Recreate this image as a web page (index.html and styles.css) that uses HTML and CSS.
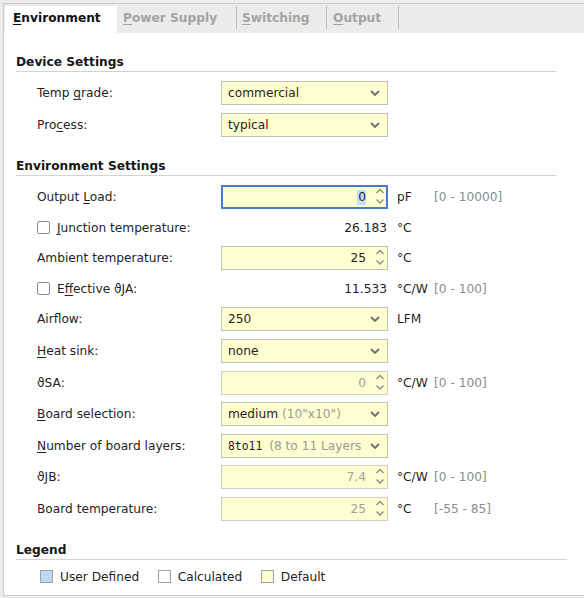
FILE: index.html
```html
<!DOCTYPE html>
<html>
<head>
<meta charset="utf-8">
<title>Environment</title>
<link rel="stylesheet" href="styles.css">
</head>
<body>
<div class="window">
  <div class="tabbar">
    <div class="tab tab-env"><span><u>E</u>nvironment</span></div>
    <div class="tab tab-power"><span><u>P</u>ower Supply</span></div>
    <span class="tab-sep"></span>
    <div class="tab tab-switch"><span><u>S</u>witching</span></div>
    <span class="tab-sep"></span>
    <div class="tab tab-output"><span><u>O</u>utput</span></div>
    <span class="tab-sep"></span>
  </div>

  <div class="content">
    <section class="section">
      <h2 class="section-title">Device Settings</h2>
      <div class="rows rows-device">
        <div class="row">
          <span class="label">Temp <u>g</u>rade:</span>
          <div class="combo"><span class="combo-text">commercial</span><svg class="chev" width="10" height="6" viewBox="0 0 10 6"><path d="M1 1 L5 5 L9 1" /></svg></div>
        </div>
        <div class="row">
          <span class="label">Pro<u>c</u>ess:</span>
          <div class="combo"><span class="combo-text">typical</span><svg class="chev" width="10" height="6" viewBox="0 0 10 6"><path d="M1 1 L5 5 L9 1" /></svg></div>
        </div>
      </div>
    </section>

    <section class="section">
      <h2 class="section-title">Environment Settings</h2>
      <div class="rows rows-env">
        <div class="row">
          <span class="label">Output <u>L</u>oad:</span>
          <div class="spinner focused"><span class="spin-value"><span class="selected-text">0</span></span><svg class="spin-arrows" width="10" height="22" viewBox="0 0 10 22"><path d="M1.5 7 L5 3.5 L8.5 7" /><path d="M1.5 13.5 L5 17 L8.5 13.5" /></svg></div>
          <span class="unit">pF</span>
          <span class="range">[0 - 10000]</span>
        </div>
        <div class="row row-check">
          <span class="label check-label"><span class="checkbox"></span><span><u>J</u>unction temperature:</span></span>
          <span class="calc-value">26.183</span>
          <span class="unit">°C</span>
        </div>
        <div class="row">
          <span class="label">Ambient temperature:</span>
          <div class="spinner"><span class="spin-value">25</span><svg class="spin-arrows" width="10" height="22" viewBox="0 0 10 22"><path d="M1.5 7 L5 3.5 L8.5 7" /><path d="M1.5 13.5 L5 17 L8.5 13.5" /></svg></div>
          <span class="unit">°C</span>
        </div>
        <div class="row row-check">
          <span class="label check-label"><span class="checkbox"></span><span>E<u>f</u>fective ϑJA:</span></span>
          <span class="calc-value">11.533</span>
          <span class="unit">°C/W</span>
          <span class="range">[0 - 100]</span>
        </div>
        <div class="row">
          <span class="label">Airflow:</span>
          <div class="combo"><span class="combo-text">250</span><svg class="chev" width="10" height="6" viewBox="0 0 10 6"><path d="M1 1 L5 5 L9 1" /></svg></div>
          <span class="unit">LFM</span>
        </div>
        <div class="row">
          <span class="label"><u>H</u>eat sink:</span>
          <div class="combo"><span class="combo-text">none</span><svg class="chev" width="10" height="6" viewBox="0 0 10 6"><path d="M1 1 L5 5 L9 1" /></svg></div>
        </div>
        <div class="row">
          <span class="label">ϑSA:</span>
          <div class="spinner disabled"><span class="spin-value">0</span><svg class="spin-arrows" width="10" height="22" viewBox="0 0 10 22"><path d="M1.5 7 L5 3.5 L8.5 7" /><path d="M1.5 13.5 L5 17 L8.5 13.5" /></svg></div>
          <span class="unit">°C/W</span>
          <span class="range">[0 - 100]</span>
        </div>
        <div class="row">
          <span class="label"><u>B</u>oard selection:</span>
          <div class="combo"><span class="combo-text">medium <span class="hint">(10"x10")</span></span><svg class="chev" width="10" height="6" viewBox="0 0 10 6"><path d="M1 1 L5 5 L9 1" /></svg></div>
        </div>
        <div class="row">
          <span class="label"><u>N</u>umber of board layers:</span>
          <div class="combo"><span class="combo-text"><span class="mono">8to11 </span><span class="hint">(8 to 11 Layers)</span></span><svg class="chev" width="10" height="6" viewBox="0 0 10 6"><path d="M1 1 L5 5 L9 1" /></svg></div>
        </div>
        <div class="row">
          <span class="label">ϑJB:</span>
          <div class="spinner disabled"><span class="spin-value">7.4</span><svg class="spin-arrows" width="10" height="22" viewBox="0 0 10 22"><path d="M1.5 7 L5 3.5 L8.5 7" /><path d="M1.5 13.5 L5 17 L8.5 13.5" /></svg></div>
          <span class="unit">°C/W</span>
          <span class="range">[0 - 100]</span>
        </div>
        <div class="row">
          <span class="label">Board temperature:</span>
          <div class="spinner disabled"><span class="spin-value">25</span><svg class="spin-arrows" width="10" height="22" viewBox="0 0 10 22"><path d="M1.5 7 L5 3.5 L8.5 7" /><path d="M1.5 13.5 L5 17 L8.5 13.5" /></svg></div>
          <span class="unit">°C</span>
          <span class="range">[-55 - 85]</span>
        </div>
      </div>
    </section>

    <section class="section">
      <h2 class="section-title legend-title">Legend</h2>
      <div class="legend">
        <span class="legend-item"><span class="swatch swatch-user"></span>User Defined</span>
        <span class="legend-item"><span class="swatch swatch-calc"></span>Calculated</span>
        <span class="legend-item"><span class="swatch swatch-default"></span>Default</span>
      </div>
    </section>
  </div>
</div>
</body>
</html>
```

FILE: styles.css
```css
* {
  box-sizing: border-box;
}

html,
body {
  margin: 0;
  padding: 0;
}

body {
  width: 584px;
  height: 598px;
  overflow: hidden;
  background: #ececec;
  font-family: "DejaVu Sans", "Noto Sans", sans-serif;
  font-size: 12.2px;
  line-height: 16px;
  color: #222222;
}

u {
  text-decoration-thickness: 1px;
  text-underline-offset: 2px;
}

.window {
  margin: 3px 0 0 3px;
  height: 593px;
  background: #ffffff;
  border: 1px solid #cbcbcb;
  border-right: 0;
}

/* Tabs */
.tabbar {
  display: flex;
  height: 29px;
  background: #ebebeb;
}

.tab {
  height: 29px;
  padding-top: 6px;
  font-weight: bold;
  color: #a3a3a3;
  white-space: nowrap;
}

.tab-env {
  width: 112px;
  height: 27px;
  margin: 2px 0 0 1px;
  padding: 4px 0 0 8px;
  background: #ffffff;
  color: #111111;
}

.tab-power {
  width: 119px;
  padding-left: 6px;
}

.tab-switch {
  width: 89px;
  padding-left: 5px;
}

.tab-output {
  width: 71px;
  padding-left: 6px;
}

.tab-sep {
  width: 1px;
  height: 23px;
  margin-top: 2px;
  background: #bcbcbc;
}

/* Content */
.content {
  padding: 20px 0 0 12px;
}

.section + .section {
  margin-top: 20px;
}

.section-title {
  margin: 0 28px 0 0;
  padding: 1px 0 1px;
  font-size: 12.2px;
  line-height: 16px;
  font-weight: bold;
  color: #161616;
  border-bottom: 1px solid #d3d3d3;
}

.legend-title {
  margin-right: 17px;
}

.rows {
  display: flex;
  flex-direction: column;
  margin-top: 9px;
  padding-left: 21px;
}

.rows-device {
  gap: 8px;
}

.rows-env {
  gap: 7.6px;
}

.row {
  display: grid;
  grid-template-columns: 184px 167px 46px auto;
  align-items: center;
  height: 24px;
}

.row-check {
  height: 22px;
}

.label {
  color: #231f24;
  white-space: nowrap;
}

.check-label {
  display: flex;
  align-items: center;
}

.checkbox {
  width: 13px;
  height: 13px;
  margin-right: 7px;
  border: 1px solid #8c8c8c;
  border-radius: 2px;
  background: #ffffff;
}

/* Combo */
.combo {
  display: flex;
  align-items: center;
  width: 167px;
  height: 24px;
  padding: 0 7px 0 6px;
  background: #fefed0;
  border: 1px solid #c2c2b2;
}

.combo-text {
  flex: 1;
  overflow: hidden;
  white-space: nowrap;
  color: #1f1f1f;
}

.hint {
  color: #9a9a9a;
}

.mono {
  font-family: "DejaVu Sans Mono", monospace;
  font-size: 11.4px;
  color: #1f1f1f;
}

.chev {
  flex: none;
  margin-left: 9px;
  fill: none;
  stroke: #6e6e6e;
  stroke-width: 1.8;
}

/* Spinner */
.spinner {
  display: flex;
  align-items: center;
  justify-content: flex-end;
  width: 167px;
  height: 24px;
  padding-right: 2px;
  background: #fefed0;
  border: 1px solid #c2c2b2;
}

.spinner.focused {
  border-color: #4a79d3;
  box-shadow: inset 0 0 0 1px #4a79d3;
}

.spinner.disabled {
  border-color: #cfcfc2;
}

.spin-value {
  margin-right: 9px;
  color: #1f1f1f;
}

.spinner.disabled .spin-value {
  color: #a0a0a0;
}

.selected-text {
  display: inline-block;
  line-height: 15px;
  padding-left: 1px;
  background: #c6dbf5;
}

.spin-arrows {
  flex: none;
  fill: none;
  stroke: #8c8c8c;
  stroke-width: 1.4;
}

.calc-value {
  padding-right: 1px;
  text-align: right;
  color: #1f1f1f;
}

.unit {
  padding-left: 9px;
  color: #1f1f1f;
  white-space: nowrap;
}

.range {
  color: #8a8a8a;
  white-space: nowrap;
}

/* Legend */
.legend {
  display: flex;
  align-items: center;
  gap: 18.5px;
  height: 16px;
  margin-top: 9px;
  padding-left: 24px;
}

.legend-item {
  display: flex;
  align-items: center;
  color: #231f24;
}

.swatch {
  width: 13px;
  height: 13px;
  margin-right: 7px;
  border: 1px solid #a0a0a0;
}

.swatch-user {
  background: #bcd8f5;
}

.swatch-calc {
  background: #ffffff;
}

.swatch-default {
  background: #fefed0;
}
```
